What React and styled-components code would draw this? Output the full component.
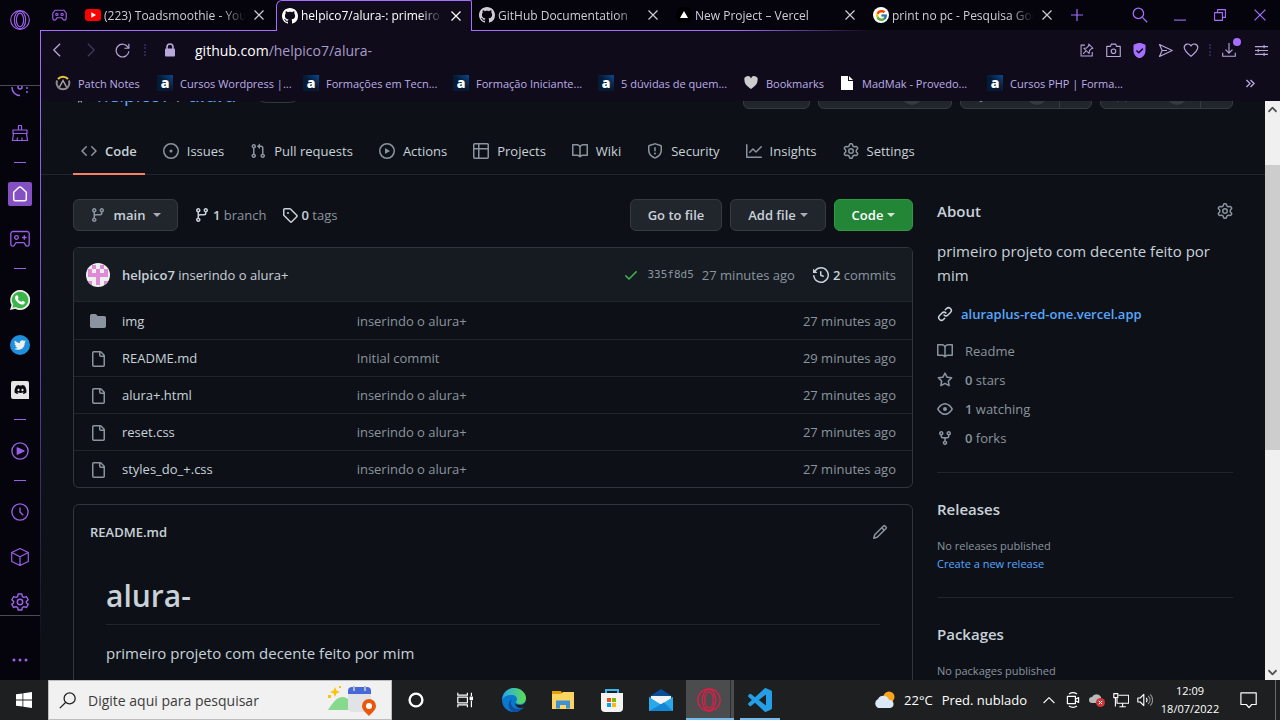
import { useState } from 'react';
import styled, { createGlobalStyle, css } from 'styled-components';
import { FaDiscord, FaTwitter } from 'react-icons/fa';
import { FcGoogle } from 'react-icons/fc';

const GlobalStyle = createGlobalStyle`
  * {
    box-sizing: border-box;
  }

  body {
    margin: 0;
    background: #0d1117;
    font-family: 'Open Sans', 'Noto Sans', sans-serif;
    font-size: 13px;
  }

  button {
    margin: 0;
    padding: 0;
    border: 0;
    background: none;
    color: inherit;
    font: inherit;
    cursor: pointer;
  }

  a {
    color: inherit;
    text-decoration: none;
  }

  svg {
    display: block;
    flex: none;
  }
`;

/* ---------- icons ---------- */

const OCTICONS = {
  code: 'M4.72 3.22a.75.75 0 011.06 1.06L2.06 8l3.72 3.72a.75.75 0 11-1.06 1.06L.47 8.53a.75.75 0 010-1.06l4.25-4.25zm6.56 0a.75.75 0 10-1.06 1.06L13.94 8l-3.72 3.72a.75.75 0 101.06 1.06l4.25-4.25a.75.75 0 000-1.06l-4.25-4.25z',
  issue: 'M8 9.5a1.5 1.5 0 100-3 1.5 1.5 0 000 3zM8 0a8 8 0 100 16A8 8 0 008 0zM1.5 8a6.5 6.5 0 1113 0 6.5 6.5 0 01-13 0z',
  pull: 'M7.177 3.073L9.573.677A.25.25 0 0110 .854v4.792a.25.25 0 01-.427.177L7.177 3.427a.25.25 0 010-.354zM3.75 2.5a.75.75 0 100 1.5.75.75 0 000-1.5zm-2.25.75a2.25 2.25 0 113 2.122v5.256a2.251 2.251 0 11-1.5 0V5.372A2.25 2.25 0 011.5 3.25zM11 2.5h-1V4h1a1 1 0 011 1v5.628a2.251 2.251 0 101.5 0V5A2.5 2.5 0 0011 2.5zm1 10.25a.75.75 0 111.5 0 .75.75 0 01-1.5 0zM3.75 12a.75.75 0 100 1.5.75.75 0 000-1.5z',
  play: 'M1.5 8a6.5 6.5 0 1113 0 6.5 6.5 0 01-13 0zM8 0a8 8 0 100 16A8 8 0 008 0zM6.379 5.227A.25.25 0 006 5.442v5.117a.25.25 0 00.379.214l4.264-2.559a.25.25 0 000-.428L6.379 5.227z',
  table: 'M0 1.75C0 .784.784 0 1.75 0h12.5C15.216 0 16 .784 16 1.75v12.5A1.75 1.75 0 0114.25 16H1.75A1.75 1.75 0 010 14.25V1.75zM1.5 6.5v7.75c0 .138.112.25.25.25H5v-8H1.5zM5 5H1.5V1.75a.25.25 0 01.25-.25H5V5zm1.5 1.5v8h7.75a.25.25 0 00.25-.25V6.5h-8zm8-1.5h-8V1.5h7.75a.25.25 0 01.25.25V5z',
  book: 'M0 1.75A.75.75 0 01.75 1h4.253c1.227 0 2.317.59 3 1.501A3.744 3.744 0 0111.006 1h4.245a.75.75 0 01.75.75v10.5a.75.75 0 01-.75.75h-4.507a2.25 2.25 0 00-1.591.659l-.622.621a.75.75 0 01-1.06 0l-.622-.621A2.25 2.25 0 005.258 13H.75a.75.75 0 01-.75-.75V1.75zm8.755 3a2.25 2.25 0 012.25-2.25H14.5v9h-3.757c-.71 0-1.4.201-1.992.572l.004-7.322zm-1.504 7.324l.004-5.073-.002-2.253A2.25 2.25 0 005.003 2.5H1.5v9h3.757a3.75 3.75 0 011.994.574z',
  shield: 'M7.467.133a1.75 1.75 0 011.066 0l5.25 1.68A1.75 1.75 0 0115 3.48V7c0 1.566-.32 3.182-1.303 4.682-.983 1.498-2.585 2.813-5.032 3.855a1.7 1.7 0 01-1.33 0c-2.447-1.042-4.049-2.357-5.032-3.855C1.32 10.182 1 8.566 1 7V3.48a1.75 1.75 0 011.217-1.667l5.25-1.68zm.61 1.429a.25.25 0 00-.153 0l-5.25 1.68a.25.25 0 00-.174.238V7c0 1.358.275 2.666 1.057 3.86.784 1.194 2.121 2.34 4.366 3.297a.2.2 0 00.154 0c2.245-.956 3.582-2.104 4.366-3.298C13.225 9.666 13.5 8.36 13.5 7V3.48a.25.25 0 00-.174-.237l-5.25-1.68zM9 10.5a1 1 0 11-2 0 1 1 0 012 0zm-.25-5.75a.75.75 0 10-1.5 0v3a.75.75 0 001.5 0v-3z',
  graph: 'M1.5 1.75a.75.75 0 00-1.5 0v12.5c0 .414.336.75.75.75h14.5a.75.75 0 000-1.5H1.5V1.75zm14.28 2.53a.75.75 0 00-1.06-1.06L10 7.94 7.53 5.47a.75.75 0 00-1.06 0L3.22 8.72a.75.75 0 001.06 1.06L7 7.06l2.47 2.47a.75.75 0 001.06 0l5.25-5.25z',
  gear: 'M7.429 1.525a6.593 6.593 0 011.142 0c.036.003.108.036.137.146l.289 1.105c.147.56.55.967.997 1.189.174.086.341.183.501.29.417.278.97.423 1.53.27l1.102-.303c.11-.03.175.016.195.046.219.31.41.641.573.989.014.031.022.11-.059.19l-.815.806c-.411.406-.562.957-.53 1.456a4.588 4.588 0 010 .582c-.032.499.119 1.05.53 1.456l.815.806c.08.08.073.159.059.19a6.494 6.494 0 01-.573.99c-.02.029-.086.074-.195.045l-1.103-.303c-.559-.153-1.112-.008-1.529.27-.16.107-.327.204-.5.29-.449.222-.851.628-.998 1.189l-.289 1.105c-.029.11-.101.143-.137.146a6.613 6.613 0 01-1.142 0c-.036-.003-.108-.037-.137-.146l-.289-1.105c-.147-.56-.55-.967-.997-1.189a4.502 4.502 0 01-.501-.29c-.417-.278-.97-.423-1.53-.27l-1.102.303c-.11.03-.175-.016-.195-.046a6.492 6.492 0 01-.573-.989c-.014-.031-.022-.11.059-.19l.815-.806c.411-.406.562-.957.53-1.456a4.587 4.587 0 010-.582c.032-.499-.119-1.05-.53-1.456l-.815-.806c-.08-.08-.073-.159-.059-.19a6.44 6.44 0 01.573-.99c.02-.029.086-.075.195-.045l1.103.303c.559.153 1.112.008 1.529-.27.16-.107.327-.204.5-.29.449-.222.851-.628.998-1.189l.289-1.105c.029-.11.101-.143.137-.146zM8 0c-.236 0-.47.01-.701.03-.743.065-1.29.615-1.458 1.261l-.29 1.106c-.017.066-.078.158-.211.224a5.994 5.994 0 00-.668.386c-.123.082-.233.09-.3.071L3.27 2.776c-.644-.177-1.392.02-1.82.63a7.977 7.977 0 00-.704 1.217c-.315.675-.111 1.422.363 1.891l.815.806c.05.048.098.147.088.294a6.084 6.084 0 000 .772c.01.147-.038.246-.088.294l-.815.806c-.474.469-.678 1.216-.363 1.891.2.428.436.835.704 1.218.428.609 1.176.806 1.82.63l1.103-.303c.066-.019.176-.011.299.071.213.143.436.272.668.386.133.066.194.158.212.224l.289 1.106c.169.646.715 1.196 1.458 1.26a8.094 8.094 0 001.402 0c.743-.064 1.29-.614 1.458-1.26l.29-1.106c.017-.066.078-.158.211-.224a5.98 5.98 0 00.668-.386c.123-.082.233-.09.3-.071l1.102.302c.644.177 1.392-.02 1.82-.63.268-.382.505-.789.704-1.217.315-.675.111-1.422-.364-1.891l-.814-.806c-.05-.048-.098-.147-.088-.294a6.1 6.1 0 000-.772c-.01-.147.039-.246.088-.294l.814-.806c.475-.469.679-1.216.364-1.891a7.992 7.992 0 00-.704-1.218c-.428-.609-1.176-.806-1.82-.63l-1.103.303c-.066.019-.176.011-.299-.071a5.991 5.991 0 00-.668-.386c-.133-.066-.194-.158-.212-.224L10.16 1.29C9.99.645 9.444.095 8.701.031A8.094 8.094 0 008 0zm1.5 8a1.5 1.5 0 11-3 0 1.5 1.5 0 013 0zM11 8a3 3 0 11-6 0 3 3 0 016 0z',
  branch: 'M11.75 2.5a.75.75 0 100 1.5.75.75 0 000-1.5zm-2.25.75a2.25 2.25 0 113 2.122V6A2.5 2.5 0 0110 8.5H6a1 1 0 00-1 1v1.128a2.251 2.251 0 11-1.5 0V5.372a2.25 2.25 0 111.5 0v1.836A2.492 2.492 0 016 7h4a1 1 0 001-1v-.628A2.25 2.25 0 019.5 3.25zM4.25 12a.75.75 0 100 1.5.75.75 0 000-1.5zM3.5 3.25a.75.75 0 111.5 0 .75.75 0 01-1.5 0z',
  tag: 'M2.5 7.775V2.75a.25.25 0 01.25-.25h5.025a.25.25 0 01.177.073l6.25 6.25a.25.25 0 010 .354l-5.025 5.025a.25.25 0 01-.354 0l-6.25-6.25a.25.25 0 01-.073-.177zm-1.5 0V2.75C1 1.784 1.784 1 2.75 1h5.025c.464 0 .91.184 1.238.513l6.25 6.25a1.75 1.75 0 010 2.474l-5.026 5.026a1.75 1.75 0 01-2.474 0l-6.25-6.25A1.75 1.75 0 011 7.775zM6 5a1 1 0 100 2 1 1 0 000-2z',
  history: 'M1.643 3.143L.427 1.927A.25.25 0 000 2.104V5.75c0 .138.112.25.25.25h3.646a.25.25 0 00.177-.427L2.715 4.215a6.5 6.5 0 11-1.18 4.458.75.75 0 10-1.493.154 8.001 8.001 0 101.6-5.684zM7.75 4a.75.75 0 01.75.75v2.992l2.028.812a.75.75 0 01-.557 1.392l-2.5-1A.75.75 0 017 8.25v-3.5A.75.75 0 017.75 4z',
  check: 'M13.78 4.22a.75.75 0 010 1.06l-7.25 7.25a.75.75 0 01-1.06 0L2.22 9.28a.75.75 0 011.06-1.06L6 10.94l6.72-6.72a.75.75 0 011.06 0z',
  folder: 'M1.75 1A1.75 1.75 0 000 2.75v10.5C0 14.216.784 15 1.75 15h12.5A1.75 1.75 0 0016 13.25v-8.5A1.75 1.75 0 0014.25 3h-6.5a.25.25 0 01-.2-.1l-.9-1.2c-.33-.44-.85-.7-1.4-.7h-3.5z',
  file: 'M3.75 1.5a.25.25 0 00-.25.25v12.5c0 .138.112.25.25.25h9.5a.25.25 0 00.25-.25V6h-2.75A1.75 1.75 0 019 4.25V1.5H3.75zm6.75.062V4.25c0 .138.112.25.25.25h2.688a.252.252 0 00-.011-.013l-2.914-2.914a.272.272 0 00-.013-.011zM2 1.75C2 .784 2.784 0 3.75 0h6.586c.464 0 .909.184 1.237.513l2.914 2.914c.329.328.513.773.513 1.237v9.586A1.75 1.75 0 0113.25 16h-9.5A1.75 1.75 0 012 14.25V1.75z',
  pencil: 'M11.013 1.427a1.75 1.75 0 012.474 0l1.086 1.086a1.75 1.75 0 010 2.474l-8.61 8.61c-.21.21-.47.364-.756.445l-3.251.93a.75.75 0 01-.927-.928l.929-3.25a1.75 1.75 0 01.445-.758l8.61-8.61zm1.414 1.06a.25.25 0 00-.354 0L10.811 3.75l1.439 1.44 1.263-1.263a.25.25 0 000-.354l-1.086-1.086zM11.189 6.25L9.75 4.81l-6.286 6.287a.25.25 0 00-.064.108l-.558 1.953 1.953-.558a.249.249 0 00.108-.064l6.286-6.286z',
  link: 'M7.775 3.275a.75.75 0 001.06 1.06l1.25-1.25a2 2 0 112.83 2.83l-2.5 2.5a2 2 0 01-2.83 0 .75.75 0 00-1.06 1.06 3.5 3.5 0 004.95 0l2.5-2.5a3.5 3.5 0 00-4.95-4.95l-1.25 1.25zm-4.69 9.64a2 2 0 010-2.83l2.5-2.5a2 2 0 012.83 0 .75.75 0 001.06-1.06 3.5 3.5 0 00-4.95 0l-2.5 2.5a3.5 3.5 0 004.95 4.95l1.25-1.25a.75.75 0 00-1.06-1.06l-1.25 1.25a2 2 0 01-2.83 0z',
  star: 'M8 .25a.75.75 0 01.673.418l1.882 3.815 4.21.612a.75.75 0 01.416 1.279l-3.046 2.97.719 4.192a.75.75 0 01-1.088.791L8 12.347l-3.766 1.98a.75.75 0 01-1.088-.79l.72-4.194L.818 6.374a.75.75 0 01.416-1.28l4.21-.611L7.327.668A.75.75 0 018 .25zm0 2.445L6.615 5.5a.75.75 0 01-.564.41l-3.097.45 2.24 2.184a.75.75 0 01.216.664l-.528 3.084 2.769-1.456a.75.75 0 01.698 0l2.77 1.456-.53-3.084a.75.75 0 01.216-.664l2.24-2.183-3.096-.45a.75.75 0 01-.564-.41L8 2.694v.001z',
  eye: 'M1.679 7.932c.412-.621 1.242-1.75 2.366-2.717C5.175 4.242 6.527 3.5 8 3.5c1.473 0 2.824.742 3.955 1.715 1.124.967 1.954 2.096 2.366 2.717a.119.119 0 010 .136c-.412.621-1.242 1.75-2.366 2.717C10.825 11.758 9.473 12.5 8 12.5c-1.473 0-2.824-.742-3.955-1.715C2.92 9.818 2.09 8.69 1.679 8.068a.119.119 0 010-.136zM8 2c-1.981 0-3.67.992-4.933 2.078C1.797 5.169.88 6.423.43 7.1a1.619 1.619 0 000 1.798c.45.678 1.367 1.932 2.637 3.024C4.329 13.008 6.019 14 8 14c1.981 0 3.67-.992 4.933-2.078 1.27-1.091 2.187-2.345 2.637-3.023a1.619 1.619 0 000-1.798c-.45-.678-1.367-1.932-2.637-3.023C11.671 2.992 9.981 2 8 2zm0 8a2 2 0 100-4 2 2 0 000 4z',
  fork: 'M5 3.25a.75.75 0 11-1.5 0 .75.75 0 011.5 0zm0 2.122a2.25 2.25 0 10-1.5 0v.878A2.25 2.25 0 005.75 8.5h1.5v2.128a2.251 2.251 0 101.5 0V8.5h1.5a2.25 2.25 0 002.25-2.25v-.878a2.25 2.25 0 10-1.5 0v.878a.75.75 0 01-.75.75h-4.5A.75.75 0 015 6.25v-.878zm3.75 7.378a.75.75 0 11-1.5 0 .75.75 0 011.5 0zm3-8.75a.75.75 0 100-1.5.75.75 0 000 1.5z',
  repo: 'M2 2.5A2.5 2.5 0 014.5 0h8.75a.75.75 0 01.75.75v12.5a.75.75 0 01-.75.75h-2.5a.75.75 0 110-1.5h1.75v-2h-8a1 1 0 00-.714 1.7.75.75 0 01-1.072 1.05A2.495 2.495 0 012 11.5v-9zM5 12.25v3.25a.25.25 0 00.4.2l1.45-1.087a.25.25 0 01.3 0L8.6 15.7a.25.25 0 00.4-.2v-3.25a.25.25 0 00-.25-.25h-3.5a.25.25 0 00-.25.25z',
  mark: 'M8 0C3.58 0 0 3.58 0 8c0 3.54 2.29 6.53 5.47 7.59.4.07.55-.17.55-.38 0-.19-.01-.82-.01-1.49-2.01.37-2.53-.49-2.69-.94-.09-.23-.48-.94-.82-1.13-.28-.15-.68-.52-.01-.53.63-.01 1.08.58 1.23.82.72 1.21 1.87.87 2.33.66.07-.52.28-.87.51-1.07-1.78-.2-3.64-.89-3.64-3.95 0-.87.31-1.59.82-2.15-.08-.2-.36-1.02.08-2.12 0 0 .67-.21 2.2.82.64-.18 1.32-.27 2-.27.68 0 1.36.09 2 .27 1.53-1.04 2.2-.82 2.2-.82.44 1.1.16 1.92.08 2.12.51.56.82 1.27.82 2.15 0 3.07-1.87 3.75-3.65 3.95.29.25.54.73.54 1.48 0 1.07-.01 1.93-.01 2.2 0 .21.15.46.55.38A8.013 8.013 0 0016 8c0-4.42-3.58-8-8-8z',
};

const Octicon = ({ name, size = 16 }) => (
  <svg width={size} height={size} viewBox="0 0 16 16" fill="currentColor" aria-hidden="true">
    <path fillRule="evenodd" d={OCTICONS[name]} />
  </svg>
);

const Line = ({ size = 20, width = 1.2, children }) => (
  <svg
    width={size}
    height={size}
    viewBox="0 0 20 20"
    fill="none"
    stroke="currentColor"
    strokeWidth={width}
    strokeLinejoin="round"
    aria-hidden="true"
  >
    {children}
  </svg>
);

const OperaIcon = ({ size = 20, width }) => (
  <Line size={size} width={width}>
    <circle cx="10" cy="10" r="9.3" />
    <ellipse cx="10" cy="10" rx="5.6" ry="8.8" />
    <ellipse cx="10" cy="10" rx="3.6" ry="6.8" />
  </Line>
);

const GamepadIcon = () => (
  <Line width={1.3}>
    <path d="M3 2.5h14a2.2 2.2 0 0 1 2.2 2.2v10.6c0 2-2.6 2.6-3.6.9l-.9-1.6c-.3-.6-.8-.9-1.4-.9H6.7c-.6 0-1.1.3-1.4.9l-.9 1.6c-1 1.7-3.6 1.1-3.6-.9V4.7A2.2 2.2 0 0 1 3 2.5z" />
    <circle cx="6.5" cy="8.5" r="1.8" />
    <path d="M14.3 6.3v4.400M12.100 8.500h4.400" />
  </Line>
);

const MaskIcon = () => (
  <Line size={15} width={1.6}>
    <path d="M4 3h12l3 4v6c0 4-4 4-5 1l-1-1H7l-1 1c-1 3-5 3-5-1V7z" />
    <circle cx="6.5" cy="8.5" r="1.5" />
    <circle cx="13.5" cy="8.5" r="1.5" />
  </Line>
);

const CornerIcon = () => (
  <Line width={1.5}>
    <path d="M2 10a8 8 0 0 0 8 8.500M17 10v2M17 14v2" />
    <circle cx="10" cy="10" r="2" />
  </Line>
);

const BroomIcon = () => (
  <Line>
    <path d="M8.5 7V2.5h3V7M3 7h14v3.500H3zM3.500 10.500L2.500 17.500h15l-1-7M7 17.500l.5-3M12 17.500v-3" />
  </Line>
);

const HomeIcon = () => (
  <Line size={18} width={1.6}>
    <path d="M3 8l5.500-5.200a2.200 2.200 0 0 1 3 0L17 8v7.500a2 2 0 0 1-2 2H5a2 2 0 0 1-2-2z" />
  </Line>
);

const WhatsappIcon = () => (
  <svg width="20" height="20" viewBox="0 0 20 20" aria-hidden="true">
    <path d="M10 0a10 10 0 1 1-4.700 18.700L0 20l1.500-5A10 10 0 0 1 10 0z" fill="#eee" />
    <path d="M10 1.700a8.300 8.300 0 1 1-4.400 15.300l-3.200.8.9-3A8.300 8.300 0 0 1 10 1.700z" fill="#3bb54a" />
    <path
      d="M7 5.200c.5 0 .6.200.9.800l.6 1.400c.1.400-.7 1.100-.8 1.400.7 1.500 1.900 2.500 3.500 3.200.5-.3 1-1.300 1.400-1.200l1.900.9c.6.300.3 1.600-.3 2.200-.7.600-1.800.9-3 .5-3-1-5.300-3-6.200-5.600-.5-1.600.7-3.600 2-3.600z"
      fill="#fff"
    />
  </svg>
);

const PlayerIcon = () => (
  <Line size={18} width={1.5}>
    <circle cx="10" cy="10" r="9" />
    <path d="M7 6.500l7.500 3.500L7 13.500z" fill="currentColor" />
  </Line>
);

const ClockIcon = () => (
  <Line size={18} width={1.5}>
    <circle cx="10" cy="10" r="9" />
    <path d="M10 5v5l3.500 3.500" />
  </Line>
);

const CubeIcon = () => (
  <Line>
    <path d="M10 1.500l8.300 4v9L10 18.500l-8.300-4v-9zM1.700 5.500L10 9.800l8.300-4.300M10 9.800v8.700" />
  </Line>
);

const CogIcon = () => (
  <Line size={18} width={1.6}>
    <path d="M8 1.200h4l.6 2.700 1.800 1 2.700-.9 2 3.500-2 1.800v1.500l2 1.800-2 3.500-2.700-.9-1.800 1-.6 2.700H8l-.6-2.700-1.800-1-2.700.9-2-3.500 2-1.800V9.300l-2-1.800 2-3.500 2.700.9 1.800-1z" />
    <circle cx="10" cy="10" r="3" />
  </Line>
);

const DotsIcon = () => (
  <svg width="18" height="4" viewBox="0 0 18 4" fill="currentColor" aria-hidden="true">
    <circle cx="3" cy="2" r="1.500" />
    <circle cx="9" cy="2" r="1.500" />
    <circle cx="15" cy="2" r="1.500" />
  </svg>
);

const CrossIcon = ({ size = 10, width = 1.2 }) => (
  <svg width={size} height={size} viewBox="0 0 10 10" fill="none" stroke="currentColor" strokeWidth={width} aria-hidden="true">
    <path d="M.5.5l9 9M9.500.5l-9 9" />
  </svg>
);

const YoutubeIcon = () => (
  <svg width="16" height="12" viewBox="0 0 16 12" aria-hidden="true">
    <rect width="16" height="12" rx="3" fill="#f00" />
    <path d="M6.300 3.300v5.400L11 6z" fill="#fff" />
  </svg>
);

const VercelIcon = () => (
  <svg width="16" height="16" viewBox="0 0 16 16" aria-hidden="true">
    <circle cx="8" cy="8" r="8" fill="#000" />
    <path d="M8 4l4 7H4z" fill="#fff" />
  </svg>
);

const OverwatchIcon = () => (
  <svg width="16" height="16" viewBox="0 0 16 16" fill="none" strokeWidth="2" aria-hidden="true">
    <path d="M3 4a6.500 6.500 0 0 1 10 0" stroke="#e8c23c" />
    <path d="M2.200 5.500a6.300 6.300 0 1 0 11.600 0" stroke="#8d8a8b" />
    <path d="M4.500 12L8 5.500l3.500 6.500" stroke="#a9a6a6" strokeWidth="1.500" />
  </svg>
);

const HeartIcon = () => (
  <svg width="16" height="16" viewBox="0 0 16 16" fill="#cdcdcf" aria-hidden="true">
    <path d="M8 14C3 10.500 1.500 8.500 1.500 5.500a3.400 3.400 0 0 1 6.500-2 3.400 3.400 0 0 1 6.500 2C14.500 8.500 13 10.500 8 14z" />
  </svg>
);

const SheetIcon = () => (
  <svg width="16" height="16" viewBox="0 0 16 16" aria-hidden="true">
    <path d="M2 1h7v5h5v9H2zM10 1l4 4h-4z" fill="#fff" />
  </svg>
);

const AVATAR = ['01010', '10101', '11111', '00100', '10101'];

const AvatarIcon = () => (
  <svg width="24" height="24" viewBox="0 0 24 24" aria-hidden="true">
    <clipPath id="avatar">
      <circle cx="12" cy="12" r="12" />
    </clipPath>
    <g clipPath="url(#avatar)">
      <rect width="24" height="24" fill="#f0f0f0" />
      {AVATAR.map((row, y) =>
        [...row].map((on, x) => on === '1' && <rect key={`${x}${y}`} x={2 + x * 4} y={2 + y * 4} width="4" height="4" fill="#df8ad5" />),
      )}
    </g>
  </svg>
);

/* ---------- shell ---------- */

const Desktop = styled.div`
  display: flex;
  flex-direction: column;
  height: 100vh;
  overflow: hidden;
`;

const Browser = styled.div`
  flex: 1;
  display: flex;
  min-height: 0;
`;

const Rail = styled.nav`
  flex: none;
  display: flex;
  flex-direction: column;
  width: 40px;
  background: #05030b;
  color: #9a60ea;
`;

const RailTop = styled.div`
  display: flex;
  justify-content: center;
  height: 86px;
  padding-top: 10px;
  border-bottom: 1px solid #4d4b52;
`;

const RailList = styled.div`
  display: flex;
  flex-direction: column;
  flex: 1;
  min-height: 0;
  overflow: hidden;
  border-bottom: 1px solid #4d4b52;
`;

const RailButton = styled.button`
  display: flex;
  flex: none;
  align-items: center;
  justify-content: center;
  height: 45px;

  ${({ $cut }) =>
    $cut &&
    css`
      align-items: flex-end;
      height: 24px;
      padding-bottom: 13px;
    `}
`;

const RailActive = styled.span`
  display: grid;
  place-items: center;
  width: 24px;
  height: 24px;
  border-radius: 2px;
  background: #8450c4;
  color: #fff;
`;

const Dash = styled.span`
  flex: none;
  width: 12px;
  height: 1px;
  margin: 7px auto 8px;
  background: #9a60ea;
`;

const RailBottom = styled.div`
  display: flex;
  flex: none;
  align-items: center;
  justify-content: center;
  height: 64px;
  padding-top: 24px;
`;

const AppBadge = styled.span`
  display: grid;
  flex: none;
  place-items: center;
  width: ${({ $size }) => $size}px;
  height: ${({ $size }) => $size}px;
  border-radius: ${({ $square }) => ($square ? '2px 2px 0' : '50%')};
  background: ${({ $bg }) => $bg};
  color: ${({ $fg }) => $fg};
`;

const Window = styled.div`
  flex: 1;
  display: flex;
  flex-direction: column;
  min-width: 0;
  color: #bdaee6;
`;

const TabStrip = styled.div`
  display: flex;
  flex: none;
  height: 31px;
  background:
    linear-gradient(90deg, #a66fff 56%, #0f0b1b 67%) bottom / 100% 1px no-repeat,
    #05030b;
`;

const PinnedTab = styled.button`
  display: grid;
  flex: none;
  place-items: center;
  width: 39px;
  height: 30px;
  color: #9a60ea;
`;

const Tab = styled.div`
  display: flex;
  flex: 0 1 197px;
  align-items: center;
  gap: 3px;
  min-width: 0;
  padding: 0 11px 1px 6px;
  color: #cfccd6;
  font-size: 12px;

  ${({ $active }) =>
    $active &&
    css`
      flex-basis: 196px;
      margin-right: 1px;
      padding: 0 9px 1px 5px;
      border: solid #a66fff;
      border-width: 1px 1px 0;
      border-radius: 6px 2px 0 0;
      background: #0f0b1b;
      color: #fff;
    `}
`;

const TabTitle = styled.span`
  flex: 1;
  overflow: hidden;
  white-space: nowrap;
  mask-image: linear-gradient(90deg, #000 calc(100% - 24px), transparent);
`;

const TabClose = styled.button`
  display: grid;
  flex: none;
  place-items: center;
  width: 12px;
  height: 16px;
  margin-left: 4px;
`;

const WindowButtons = styled.div`
  display: flex;
  flex: none;
  margin-left: auto;
`;

const ChromeButton = styled.button`
  display: grid;
  flex: none;
  place-items: center;
  width: ${({ $w }) => $w || 40}px;
  height: 30px;
  color: ${({ $color }) => $color || '#a66fff'};
`;

const Frame = styled.div`
  flex: 1;
  display: flex;
  min-height: 0;
`;

const Edge = styled.div`
  flex: none;
  width: 1px;
  background: linear-gradient(#a66fff, #7d4fd0 40%, #0d1117 95%);
`;

const View = styled.div`
  flex: 1;
  display: flex;
  flex-direction: column;
  min-width: 0;
  background: #0f0b1b;
`;

const AddressBar = styled.div`
  display: flex;
  flex: none;
  align-items: center;
  height: 38px;
  padding: 0 3px 0 1px;
`;

const Grip = styled.span`
  flex: none;
  width: 2px;
  height: 12px;
  margin: ${({ $tight }) => ($tight ? '0 2px 0 5px' : '0 6px')};
  border-left: 2px dotted #2d2450;
`;

const Lock = styled.span`
  display: grid;
  place-items: center;
  width: 22px;
  margin: 0 14px 0 7px;
  color: #b7a8dc;
`;

const UrlButton = styled.button`
  flex: 1;
  min-width: 0;
  color: #a99cc9;
  font-size: 14px;
  text-align: left;
  cursor: text;

  b {
    color: #fff;
    font-weight: 400;
  }
`;

const UrlInput = styled.input`
  flex: 1;
  min-width: 0;
  border: 0;
  outline: 0;
  background: none;
  color: #fff;
  font: inherit;
  font-size: 14px;
`;

const Download = styled(ChromeButton)`
  position: relative;
  width: 32px;

  &::after {
    content: '';
    position: absolute;
    top: 3px;
    right: 4px;
    width: 8px;
    height: 8px;
    border-radius: 50%;
    background: #a66fff;
  }
`;

const Bookmarks = styled.div`
  display: flex;
  flex: none;
  align-items: center;
  height: 32px;
  padding: 0 10px 4px 14px;
`;

const Bookmark = styled.a`
  display: flex;
  flex: 0 1 ${({ $w }) => $w}px;
  align-items: center;
  gap: 7px;
  min-width: 0;
  font-size: 11px;
  white-space: nowrap;
`;

const AluraIcon = styled.span`
  display: grid;
  flex: none;
  place-items: center;
  width: 16px;
  height: 16px;
  background: linear-gradient(225deg, #0a4a8f, #051a35 50%);
  color: #fff;
  font-size: 14px;
  font-weight: 800;
  line-height: 14px;
`;

/* ---------- repository page ---------- */

const PageFrame = styled.div`
  flex: 1;
  display: flex;
  min-height: 0;
`;

const Page = styled.main`
  flex: 1;
  min-width: 0;
  overflow: hidden;
  background: #0d1117;
  color: #c9d1d9;
`;

const RepoHead = styled.div`
  display: flex;
  align-items: flex-end;
  justify-content: space-between;
  height: 8px;
  padding: 0 32px;
`;

const RepoTitle = styled.div`
  display: flex;
  align-items: center;
  gap: 8px;
  height: 28px;
  color: #8b949e;
  font-size: 19px;

  a {
    color: #58a6ff;
  }

  strong {
    font-weight: 600;
  }
`;

const Visibility = styled.span`
  align-self: flex-start;
  height: 22px;
  margin-left: 4px;
  padding: 0 7px;
  border: 1px solid #30363d;
  border-radius: 11px;
  font-size: 11px;
  line-height: 18px;
`;

const RepoActions = styled.div`
  display: flex;
  gap: 8px;
`;

const RepoAction = styled.div`
  display: flex;
  height: 28px;
  border: 1px solid #363b42;
  border-radius: 6px;
  background: #21262d;
  color: #c9d1d9;
  font-size: 11px;

  button {
    display: flex;
    align-items: center;
    justify-content: center;
    gap: 8px;
    width: ${({ $w }) => $w}px;
  }

  button + button {
    width: 32px;
    border-left: 1px solid #363b42;
  }

  svg {
    color: #8b949e;
  }
`;

const Count = styled.span`
  min-width: 20px;
  border-radius: 10px;
  background: #343942;
  line-height: 20px;
`;

const RepoNav = styled.nav`
  display: flex;
  gap: 10px;
  height: 48px;
  margin-top: 18px;
  padding: 0 32px;
  border-bottom: 1px solid #21262d;
`;

const RepoTab = styled.a`
  display: flex;
  align-items: center;
  gap: 8px;
  height: 48px;
  padding: 2px 8px 0;
  border-bottom: 2px solid ${({ $active }) => ($active ? '#f78166' : 'transparent')};
  font-size: 13px;
  font-weight: ${({ $active }) => ($active ? 600 : 400)};

  svg {
    color: #8b949e;
  }
`;

const Columns = styled.div`
  display: grid;
  grid-template-columns: minmax(0, 1fr) 296px;
  gap: 24px;
  padding: 24px 32px;
`;

const Toolbar = styled.div`
  display: flex;
  align-items: center;
  gap: 8px;
  height: 32px;
  margin-bottom: 16px;
`;

const Button = styled.button`
  display: flex;
  align-items: center;
  justify-content: center;
  gap: ${({ $gap }) => $gap || 4}px;
  width: ${({ $w }) => $w}px;
  height: 32px;
  border: 1px solid ${({ $primary }) => ($primary ? '#2e9a43' : '#363b42')};
  border-radius: 6px;
  background: ${({ $primary }) => ($primary ? '#238636' : '#21262d')};
  color: ${({ $primary }) => ($primary ? '#fff' : '#c9d1d9')};
  font-size: 13px;
  font-weight: 600;

  svg {
    color: #8b949e;
  }
`;

const Caret = styled.span`
  border: 4px solid transparent;
  border-bottom: 0;
  border-top-color: currentColor;
  opacity: 0.8;
`;

const RefLink = styled.a`
  display: flex;
  align-items: center;
  gap: 3px;
  margin-left: 8px;
  color: #8b949e;

  svg,
  strong {
    color: #c9d1d9;
    font-weight: 600;
  }
`;

const Spacer = styled.span`
  flex: 1;
`;

const Panel = styled.section`
  margin-bottom: 16px;
  border: 1px solid #30363d;
  border-radius: 6px;
  overflow: hidden;
`;

const CommitBar = styled.div`
  display: flex;
  align-items: center;
  gap: 8px;
  height: 54px;
  padding: 0 16px 0 12px;
  border-bottom: 1px solid #21262d;
  background: #161b22;
  color: #8b949e;

  p {
    flex: 1;
    margin: 0 0 0 4px;
    color: #c9d1d9;
  }

  strong {
    color: #c9d1d9;
    font-weight: 600;
  }
`;

const Passed = styled.span`
  color: #3fb950;
`;

const Hash = styled.a`
  font-family: 'DejaVu Sans Mono', monospace;
  font-size: 11px;
`;

const Commits = styled.a`
  display: flex;
  align-items: center;
  gap: 4px;
  margin-left: 10px;
`;

const FileTable = styled.table`
  width: 100%;
  border-collapse: collapse;
  table-layout: fixed;

  td {
    height: 37px;
    padding: 1px 0 0;
    border-top: 1px solid #21262d;
    color: #8b949e;
  }

  tr:first-child td {
    border-top: 0;
  }

  td:nth-child(1) {
    width: 48px;
    padding: 2px 0 0 16px;
  }

  td:nth-child(2) {
    width: 28%;
    color: #c9d1d9;
  }

  td:nth-child(4) {
    width: 20%;
    padding-right: 16px;
    text-align: right;
  }
`;

const ReadmeHead = styled.div`
  display: flex;
  align-items: center;
  justify-content: space-between;
  height: 54px;
  padding: 0 24px 0 16px;
  font-weight: 600;

  button {
    color: #8b949e;
  }
`;

const ReadmeBody = styled.article`
  padding: 13px 32px 32px;
  font-size: 15px;

  h1 {
    margin: 0 0 16px;
    padding-bottom: 4px;
    border-bottom: 1px solid #21262d;
    font-size: 30px;
    font-weight: 600;
    line-height: 48px;
  }

  p {
    margin: 0;
    line-height: 24px;
  }
`;

const AsideSection = styled.section`
  padding-bottom: 24px;
  margin-bottom: 24px;
  border-bottom: 1px solid #21262d;
  color: #8b949e;
  font-size: 11px;
  line-height: 18px;

  a {
    color: #58a6ff;
  }
`;

const AsideTitle = styled.h2`
  display: flex;
  align-items: center;
  justify-content: space-between;
  margin: 0 0 16px;
  color: #c9d1d9;
  font-size: 15px;
  font-weight: 600;
  line-height: 24px;

  button {
    color: #8b949e;
  }
`;

const About = styled.p`
  margin: 0 0 16px;
  color: #c9d1d9;
  font-size: 15px;
  line-height: 24px;
`;

const Homepage = styled.div`
  display: flex;
  align-items: center;
  gap: 8px;
  height: 22px;
  margin-bottom: 15px;
  color: #c9d1d9;
  font-size: 13px;
  font-weight: 600;
`;

const Facts = styled.ul`
  display: grid;
  gap: 8px;
  margin: 0;
  padding: 0;
  list-style: none;
  font-size: 13px;

  li {
    display: flex;
    align-items: center;
    gap: 12px;
    height: 21px;
  }

  strong {
    font-weight: 600;
  }
`;

const ScrollBar = styled.div`
  display: flex;
  flex: none;
  flex-direction: column;
  width: 15px;
  background: #f0f0f0;
  color: #505050;
`;

const ScrollArrow = styled.button`
  display: grid;
  place-items: center;
  height: 16px;
`;

const ScrollSpace = styled.div`
  flex: ${({ $part }) => $part};
  background: ${({ $thumb }) => ($thumb ? '#cdcdcd' : 'none')};
`;

/* ---------- taskbar ---------- */

const TaskBar = styled.footer`
  display: flex;
  flex: none;
  height: 40px;
  background: #1e1f21;
  color: #fff;
`;

const StartButton = styled.button`
  display: grid;
  place-items: center;
  width: 48px;
`;

const Search = styled.label`
  display: flex;
  flex: 0 1 344px;
  align-items: center;
  gap: 12px;
  min-width: 0;
  padding: 0 14px 0 10px;
  border: 1px solid #bdbdbd;
  background: #f1f1f1;
  color: #222;

  input {
    flex: 1;
    min-width: 0;
    padding: 0;
    border: 0;
    outline: 0;
    background: none;
    font: inherit;
    font-size: 14px;
  }

  input::placeholder {
    color: #3c3c3c;
    opacity: 1;
  }
`;

const Task = styled.button`
  display: grid;
  flex: none;
  place-items: center;
  width: 48px;
  margin-right: 1px;

  ${({ $state }) =>
    $state === 'open' &&
    css`
      width: 40px;
      margin: 0 4px 0 5px;
      border-top: 2px solid transparent;
      border-bottom: 2px solid #76b9ed;
    `}

  ${({ $state }) =>
    $state === 'active' &&
    css`
      border-bottom: 2px solid #76b9ed;
      background: linear-gradient(90deg, #4b4c4e 44px, #2c2d2f 44px, #2c2d2f 45px, #4b4c4e 45px);
      padding: 2px 3px 0 0;
    `}
`;

const Tray = styled.div`
  display: flex;
  align-items: center;
  margin-left: auto;
`;

const Weather = styled.button`
  display: flex;
  align-items: center;
  gap: 9px;
  margin-right: 10px;
`;

const TrayButton = styled.button`
  display: grid;
  place-items: center;
  width: 24px;
  height: 40px;
`;

const Clock = styled.button`
  width: 66px;
  font-size: 11px;
  line-height: 18px;
  text-align: center;
`;

const NoticeButton = styled.button`
  display: grid;
  place-items: center;
  width: 53px;
  height: 40px;
  border-right: 1px solid #6b6b6d;
  margin-right: 4px;
`;

const repoTabs = [
  ['code', 'Code'],
  ['issue', 'Issues'],
  ['pull', 'Pull requests'],
  ['play', 'Actions'],
  ['table', 'Projects'],
  ['book', 'Wiki'],
  ['shield', 'Security'],
  ['graph', 'Insights'],
  ['gear', 'Settings'],
];

const files = [
  ['folder', 'img', 'inserindo o alura+', '27 minutes ago'],
  ['file', 'README.md', 'Initial commit', '29 minutes ago'],
  ['file', 'alura+.html', 'inserindo o alura+', '27 minutes ago'],
  ['file', 'reset.css', 'inserindo o alura+', '27 minutes ago'],
  ['file', 'styles_do_+.css', 'inserindo o alura+', '27 minutes ago'],
];

const alura = <AluraIcon aria-hidden="true">a</AluraIcon>;

const bookmarks = [
  [<OverwatchIcon />, 'Patch Notes', 102],
  [alura, 'Cursos Wordpress |...', 146],
  [alura, 'Formações em Tecn...', 150],
  [alura, 'Formação Iniciante...', 145],
  [alura, '5 dúvidas de quem...', 145],
  [<HeartIcon />, 'Bookmarks', 96],
  [<SheetIcon />, 'MadMak - Provedo...', 148],
  [alura, 'Cursos PHP | Forma...', 140],
];

const tabs = [
  [<YoutubeIcon />, '(223) Toadsmoothie - YouTube'],
  [<Octicon name="mark" />, 'helpico7/alura-: primeiro projeto com decente feito por mim', true],
  [<Octicon name="mark" />, 'GitHub Documentation'],
  [<VercelIcon />, 'New Project – Vercel'],
  [
    <AppBadge $size={16} $bg="#fff">
      <FcGoogle size={13} />
    </AppBadge>,
    'print no pc - Pesquisa Google',
  ],
];

const SideRail = () => (
  <Rail aria-label="Sidebar">
    <RailTop>
      <OperaIcon />
    </RailTop>
    <RailList>
      <RailButton $cut aria-label="GX Corner">
        <CornerIcon />
      </RailButton>
      <RailButton aria-label="Cleaner">
        <BroomIcon />
      </RailButton>
      <Dash />
      <RailButton aria-label="Home">
        <RailActive>
          <HomeIcon />
        </RailActive>
      </RailButton>
      <RailButton aria-label="Games">
        <GamepadIcon />
      </RailButton>
      <Dash />
      <RailButton aria-label="WhatsApp">
        <WhatsappIcon />
      </RailButton>
      <RailButton aria-label="Twitter">
        <AppBadge $size={20} $bg="#1d8fdd" $fg="#eee">
          <FaTwitter size={12} />
        </AppBadge>
      </RailButton>
      <RailButton aria-label="Discord">
        <AppBadge $size={18} $square $bg="#e6e6e6" $fg="#0a0810">
          <FaDiscord size={13} />
        </AppBadge>
      </RailButton>
      <Dash />
      <RailButton aria-label="Player">
        <PlayerIcon />
      </RailButton>
      <Dash />
      <RailButton aria-label="History">
        <ClockIcon />
      </RailButton>
      <RailButton aria-label="Extensions">
        <CubeIcon />
      </RailButton>
      <RailButton aria-label="Settings">
        <CogIcon />
      </RailButton>
    </RailList>
    <RailBottom>
      <DotsIcon />
    </RailBottom>
  </Rail>
);

const BrowserTabs = () => (
  <TabStrip>
    <PinnedTab aria-label="GX Corner">
      <MaskIcon />
    </PinnedTab>
    {tabs.map(([icon, title, active]) => (
      <Tab key={title} $active={active}>
        {icon}
        <TabTitle>{title}</TabTitle>
        <TabClose aria-label="Close tab">
          <CrossIcon />
        </TabClose>
      </Tab>
    ))}
    <ChromeButton $w={26} aria-label="New tab">
      <Line size={12} width={2}>
        <path d="M10 0v20M0 10h20" />
      </Line>
    </ChromeButton>
    <WindowButtons>
      <ChromeButton aria-label="Search tabs">
        <Line size={16} width={1.6}>
          <circle cx="8" cy="8" r="6.500" />
          <path d="M13 13l6 6" />
        </Line>
      </ChromeButton>
      <ChromeButton aria-label="Minimize">
        <Line size={12} width={1.8}>
          <path d="M0 18.500h20" />
        </Line>
      </ChromeButton>
      <ChromeButton aria-label="Restore">
        <Line size={12} width={1.8}>
          <path d="M1 6h13v13H1zM6 6V1h13v13h-5" />
        </Line>
      </ChromeButton>
      <ChromeButton aria-label="Close">
        <CrossIcon size={12} width={1} />
      </ChromeButton>
    </WindowButtons>
  </TabStrip>
);

const Address = () => {
  const [editing, setEditing] = useState(false);

  return (
    <AddressBar>
      <ChromeButton $w={32} $color="#b7a8dc" aria-label="Back">
        <Line size={14} width={1.8}>
          <path d="M13 1L4 10l9 9" />
        </Line>
      </ChromeButton>
      <ChromeButton $w={32} $color="#433a5c" aria-label="Forward">
        <Line size={14} width={1.8}>
          <path d="M7 1l9 9-9 9" />
        </Line>
      </ChromeButton>
      <ChromeButton $w={32} $color="#b7a8dc" aria-label="Reload">
        <Line size={15} width={1.6}>
          <path d="M17.500 6A8.500 8.500 0 1 0 18.500 11M18.500 1v6h-6" />
        </Line>
      </ChromeButton>
      <Grip />
      <Lock>
        <svg width="12" height="14" viewBox="0 0 12 14" aria-hidden="true">
          <path d="M3 6V4a3 3 0 0 1 6 0v2" fill="none" stroke="currentColor" strokeWidth="1.600" />
          <rect x="1" y="5.500" width="10" height="8" rx="1" fill="currentColor" />
        </svg>
      </Lock>
      {editing ? (
        <UrlInput aria-label="Address" defaultValue="github.com/helpico7/alura-" autoFocus onBlur={() => setEditing(false)} />
      ) : (
        <UrlButton onClick={() => setEditing(true)}>
          <b>github.com</b>/helpico7/alura-
        </UrlButton>
      )}
      <ChromeButton $w={26} $color="#b7a8dc" aria-label="Pin">
        <Line size={14} width={1.5}>
          <path d="M7 3H1.500v15.500h16V13M12.500 1.500l6 6-2 .5-3 3-.5 4-7.500-7.500 4-.5 3-3zM9 11l-4.500 4.500" />
        </Line>
      </ChromeButton>
      <ChromeButton $w={26} $color="#b7a8dc" aria-label="Snapshot">
        <Line size={15} width={1.5}>
          <path d="M1 4.500h5l1-3h6l1 3h5V18H1z" />
          <circle cx="10" cy="11" r="3" />
        </Line>
      </ChromeButton>
      <ChromeButton $w={26} aria-label="Ad blocker">
        <Line size={15} width={2}>
          <path d="M10 .5l7 2.500v7c0 5-3 8-7 9.500C6 18 3 15 3 10V3z" fill="currentColor" />
          <path d="M6 10l3 3 5.500-5.500" stroke="#0f0b1b" />
        </Line>
      </ChromeButton>
      <ChromeButton $w={26} $color="#b7a8dc" aria-label="Send">
        <Line size={15} width={1.5}>
          <path d="M2 2l17 8-17 8 3.500-8zM5.500 10H12" />
        </Line>
      </ChromeButton>
      <ChromeButton $w={26} $color="#b7a8dc" aria-label="Favourite">
        <Line size={16} width={1.5}>
          <path d="M10 18C4 13 1.500 10.500 1.500 7a4.500 4.500 0 0 1 8.500-2 4.500 4.500 0 0 1 8.500 2c0 3.500-2.500 6-8.500 11z" />
        </Line>
      </ChromeButton>
      <Grip $tight />
      <Download $color="#b7a8dc" aria-label="Downloads">
        <Line size={14} width={1.6}>
          <path d="M10 0v14M5 9.500l5 5 5-5M1 14v5h18v-5" />
        </Line>
      </Download>
      <ChromeButton $w={32} $color="#b7a8dc" aria-label="Easy setup">
        <Line size={13} width={1.7}>
          <path d="M0 4h20M0 10h20M0 16h20M14 1.500v5M5 7.500v5M14 13.500v5" />
        </Line>
      </ChromeButton>
    </AddressBar>
  );
};

const CommitTable = () => (
  <Panel>
    <CommitBar>
      <AvatarIcon />
      <p>
        <strong>helpico7</strong> inserindo o alura+
      </p>
      <Passed>
        <Octicon name="check" />
      </Passed>
      <Hash href="#commit">335f8d5</Hash>
      <span>27 minutes ago</span>
      <Commits href="#commits">
        <strong>
          <Octicon name="history" />
        </strong>
        <span>
          <strong>2</strong> commits
        </span>
      </Commits>
    </CommitBar>
    <FileTable>
      <tbody>
        {files.map(([icon, name, message, time]) => (
          <tr key={name}>
            <td>
              <Octicon name={icon} />
            </td>
            <td>
              <a href={`#${name}`}>{name}</a>
            </td>
            <td>{message}</td>
            <td>{time}</td>
          </tr>
        ))}
      </tbody>
    </FileTable>
  </Panel>
);

const RepoAside = () => (
  <aside>
    <AsideSection>
      <AsideTitle>
        About
        <button aria-label="Edit repository details">
          <Octicon name="gear" />
        </button>
      </AsideTitle>
      <About>primeiro projeto com decente feito por mim</About>
      <Homepage>
        <Octicon name="link" />
        <a href="#site">aluraplus-red-one.vercel.app</a>
      </Homepage>
      <Facts>
        <li>
          <Octicon name="book" /> Readme
        </li>
        <li>
          <Octicon name="star" />
          <span>
            <strong>0</strong> stars
          </span>
        </li>
        <li>
          <Octicon name="eye" />
          <span>
            <strong>1</strong> watching
          </span>
        </li>
        <li>
          <Octicon name="fork" />
          <span>
            <strong>0</strong> forks
          </span>
        </li>
      </Facts>
    </AsideSection>
    <AsideSection>
      <AsideTitle>Releases</AsideTitle>
      <div>No releases published</div>
      <a href="#release">Create a new release</a>
    </AsideSection>
    <AsideSection>
      <AsideTitle>Packages</AsideTitle>
      <div>No packages published</div>
    </AsideSection>
  </aside>
);

const Repository = () => (
  <Page>
    <RepoHead>
      <RepoTitle>
        <Octicon name="repo" />
        <span>
          <a href="#owner">helpico7</a> /{' '}
          <a href="#repo">
            <strong>alura-</strong>
          </a>
        </span>
        <Visibility>Public</Visibility>
      </RepoTitle>
      <RepoActions>
        <RepoAction $w={65}>
          <button>Pin</button>
        </RepoAction>
        <RepoAction $w={132}>
          <button>
            Unwatch <Count>1</Count>
          </button>
        </RepoAction>
        <RepoAction $w={98}>
          <button>
            <Octicon name="fork" />
            Fork <Count>0</Count>
          </button>
          <button aria-label="Fork options">
            <Caret />
          </button>
        </RepoAction>
        <RepoAction $w={99}>
          <button>
            <Octicon name="star" />
            Star <Count>0</Count>
          </button>
          <button aria-label="Star options">
            <Caret />
          </button>
        </RepoAction>
      </RepoActions>
    </RepoHead>
    <RepoNav>
      {repoTabs.map(([icon, label], i) => (
        <RepoTab key={label} href={`#${label}`} $active={i === 0}>
          <Octicon name={icon} />
          {label}
        </RepoTab>
      ))}
    </RepoNav>
    <Columns>
      <div>
        <Toolbar>
          <Button $w={105} $gap={8}>
            <Octicon name="branch" />
            main
            <Caret />
          </Button>
          <RefLink href="#branches">
            <Octicon name="branch" />
            <span>
              <strong>1</strong> branch
            </span>
          </RefLink>
          <RefLink href="#tags">
            <Octicon name="tag" />
            <span>
              <strong>0</strong> tags
            </span>
          </RefLink>
          <Spacer />
          <Button $w={92}>Go to file</Button>
          <Button $w={96}>
            Add file <Caret />
          </Button>
          <Button $w={79} $primary>
            Code <Caret />
          </Button>
        </Toolbar>
        <CommitTable />
        <Panel>
          <ReadmeHead>
            README.md
            <button aria-label="Edit file">
              <Octicon name="pencil" />
            </button>
          </ReadmeHead>
          <ReadmeBody>
            <h1>alura-</h1>
            <p>primeiro projeto com decente feito por mim</p>
          </ReadmeBody>
        </Panel>
      </div>
      <RepoAside />
    </Columns>
  </Page>
);

const Chevron = ({ down }) => (
  <Line size={9} width={4}>
    <path d={down ? 'M1 5l9 9 9-9' : 'M1 15l9-9 9 9'} />
  </Line>
);

const SearchArt = () => (
  <svg width="50" height="32" viewBox="0 0 50 32" aria-hidden="true">
    <path d="M1 26c6-9 9-13 15-13 5 0 8 5 10 13z" fill="#86d98d" />
    <path d="M8 3l1.500 3.500L13 8l-3.500 1.500L8 13 6.500 9.500 3 8l3.500-1.500z" fill="#fbc40b" />
    <path d="M1 11h3v3H1zM12 2h2v2h-2z" fill="#fbc40b" />
    <rect x="21" y="4" width="23" height="24" rx="4" fill="#e2e3e6" />
    <path d="M21 10V7a4 4 0 0 1 4-4h15a4 4 0 0 1 4 4v3z" fill="#4668d8" />
    <path d="M27 2v5M38 2v5" stroke="#b4bac6" strokeWidth="2" />
    <path d="M42 32c-4-4-7-6.500-7-10a7 7 0 0 1 14 0c0 3.500-3 6-7 10z" fill="#e8590c" />
    <circle cx="42" cy="22" r="3" fill="#fff" />
  </svg>
);

const EdgeIcon = () => (
  <svg width="24" height="24" viewBox="0 0 24 24" aria-hidden="true">
    <defs>
      <linearGradient id="edgeTop" x1="0" x2="1">
        <stop offset="0" stopColor="#24a8ee" />
        <stop offset="1" stopColor="#5fdc52" />
      </linearGradient>
    </defs>
    <circle cx="12" cy="12" r="12" fill="#0b78d0" />
    <path d="M0 12C1 4 6 0 12 0c7 0 12 5 12 10 0 4-3 6-6 6-3 0-4-1-4-2s1-1 1-3c0-2-2-4-5-4-5 0-9 2-10 5z" fill="url(#edgeTop)" />
    <path d="M10 11c-3 5 1 10 6 10 3 0 5-1 6-3-2 4-6 6-10 6-5-1-8-9-2-13z" fill="#104f9c" />
    <path d="M24 11c0 4-3 6-6 6-3 0-5-1-5-2 0 3 3 5 6 5 2 0 3-1 4-2 1-2 1-4 1-7z" fill="#1e1f21" />
  </svg>
);

const TaskIcons = () => (
  <>
    <Task aria-label="Cortana">
      <Line size={16} width={3}>
        <circle cx="10" cy="10" r="8" />
      </Line>
    </Task>
    <Task aria-label="Task view">
      <Line size={16} width={1.5}>
        <path d="M1 1v3h12V1M1 6.500h12v7H1zM1 19v-3h12v3M18 1v4M18 11v8" />
        <path d="M16.500 6.500h3v3h-3z" fill="currentColor" />
      </Line>
    </Task>
    <Task aria-label="Edge">
      <EdgeIcon />
    </Task>
    <Task aria-label="File explorer">
      <svg width="22" height="20" viewBox="0 0 22 20" aria-hidden="true">
        <path d="M0 1h9l1 2v4H0z" fill="#e2a105" />
        <path d="M0 4h9l2-2h11v17H0z" fill="#fcd462" />
        <path d="M4 18.500v-8h14v8h-4V15H8v3.500z" fill="#3f92d2" />
      </svg>
    </Task>
    <Task aria-label="Store">
      <svg width="24" height="24" viewBox="0 0 24 24" aria-hidden="true">
        <path d="M6 6V2h12v4" fill="none" stroke="#37b5ee" strokeWidth="2" />
        <path d="M1 5h22v15a4 4 0 0 1-4 4H5a4 4 0 0 1-4-4z" fill="#f4f4f4" />
        <path d="M7 10h4v4H7z" fill="#f25022" />
        <path d="M12 10h4v4h-4z" fill="#7fba00" />
        <path d="M7 15h4v4H7z" fill="#00a4ef" />
        <path d="M12 15h4v4h-4z" fill="#ffb900" />
      </svg>
    </Task>
    <Task aria-label="Mail">
      <svg width="24" height="24" viewBox="0 0 24 24" aria-hidden="true">
        <path d="M0 9l12-8 12 8v6H0z" fill="#0a4e9b" />
        <path d="M2 8h20v8H2z" fill="#f3f3f3" />
        <path d="M0 9l12 7.500L24 9v14H0z" fill="#29a9ea" />
        <path d="M0 23l15-8.500L24 23z" fill="#1686d4" />
      </svg>
    </Task>
    <Task $state="active" aria-label="Opera GX">
      <AppBadge $size={24} $fg="#e11d48">
        <OperaIcon size={24} width={1.1} />
      </AppBadge>
    </Task>
    <Task $state="open" aria-label="Visual Studio Code">
      <svg width="24" height="24" viewBox="0 0 24 24" fill="#249fe6" aria-hidden="true">
        <path d="M23.150 2.587L18.210.21a1.494 1.494 0 0 0-1.705.29l-9.460 8.630-4.120-3.128a.999.999 0 0 0-1.276.057L.327 7.261A1 1 0 0 0 .326 8.740L3.899 12 .326 15.260a1 1 0 0 0 .001 1.479L1.650 17.940a.999.999 0 0 0 1.276.057l4.120-3.128 9.460 8.630a1.492 1.492 0 0 0 1.704.29l4.942-2.377A1.500 1.500 0 0 0 24 20.060V3.939a1.500 1.500 0 0 0-.85-1.352zm-5.146 14.861L10.826 12l7.178-5.448v10.896z" />
      </svg>
    </Task>
  </>
);

const SystemTray = () => (
  <Tray>
    <Weather>
      <svg width="22" height="18" viewBox="0 0 22 18" aria-hidden="true">
        <circle cx="16" cy="6" r="5.500" fill="#f9a51b" />
        <path d="M5 17a5 5 0 0 1 0-9 6 6 0 0 1 11 1 4 4 0 0 1 1 8z" fill="#dce8f8" />
      </svg>
      <span>22°C</span>
      <span>Pred. nublado</span>
    </Weather>
    <TrayButton aria-label="Hidden icons">
      <Line size={12} width={1.8}>
        <path d="M1 15l9-9 9 9" />
      </Line>
    </TrayButton>
    <TrayButton aria-label="Meet now">
      <Line size={16} width={1.5}>
        <path d="M3 5.500h10v9H3zM13 9l4-2v6l-4-2M5 2.500c3-2 7-2 10 0M5 17.500c3 2 7 2 10 0" />
      </Line>
    </TrayButton>
    <TrayButton aria-label="OneDrive">
      <svg width="16" height="14" viewBox="0 0 16 14" aria-hidden="true">
        <path d="M3 10a3 3 0 0 1 0-6 5 5 0 0 1 9 0v6z" fill="#b9b9b9" />
        <circle cx="11.500" cy="9.500" r="4.500" fill="#d13438" />
        <path d="M9.800 7.800l3.400 3.400M13.200 7.800l-3.400 3.400" stroke="#fff" />
      </svg>
    </TrayButton>
    <TrayButton aria-label="Network">
      <Line size={16} width={1.4}>
        <path d="M1 2h5v5H1zM7 4h12.500v10H5V8M3 7v11M12 14v4M8 18.500h8" />
      </Line>
    </TrayButton>
    <TrayButton aria-label="Volume">
      <Line size={16} width={1.4}>
        <path d="M1 7.500h3L8.500 3v14L4 12.500H1zM11.500 7.500c1.500 1.500 1.500 3.500 0 5" />
        <path d="M14 5c3 3 3 7 0 10M16.500 3c4 4 4 10 0 14" opacity=".5" />
      </Line>
    </TrayButton>
    <Clock>
      12:09
      <br />
      18/07/2022
    </Clock>
    <NoticeButton aria-label="Notifications">
      <Line size={18} width={1.3}>
        <path d="M1 2h17v13h-5l-3 3.500L7 15H1z" />
      </Line>
    </NoticeButton>
  </Tray>
);

const App = () => (
  <Desktop>
    <GlobalStyle />
    <Browser>
      <SideRail />
      <Window>
        <BrowserTabs />
        <Frame>
          <Edge />
          <View>
            <Address />
            <Bookmarks>
              {bookmarks.map(([icon, label, width]) => (
                <Bookmark key={label} href="#bookmark" $w={width}>
                  {icon}
                  {label}
                </Bookmark>
              ))}
              <Spacer />
              <ChromeButton $w={40} $color="#b7a8dc" aria-label="More bookmarks">
                <Line size={9} width={3}>
                  <path d="M1 2l8 8-8 8M10 2l8 8-8 8" />
                </Line>
              </ChromeButton>
            </Bookmarks>
            <PageFrame>
              <Repository />
              <ScrollBar>
                <ScrollArrow aria-label="Scroll up">
                  <Chevron />
                </ScrollArrow>
                <ScrollSpace $part={48} />
                <ScrollSpace $part={285} $thumb />
                <ScrollSpace $part={214} />
                <ScrollArrow aria-label="Scroll down">
                  <Chevron down />
                </ScrollArrow>
              </ScrollBar>
            </PageFrame>
          </View>
        </Frame>
      </Window>
    </Browser>
    <TaskBar>
      <StartButton aria-label="Start">
        <svg width="16" height="16" viewBox="0 0 16 16" fill="#fff" aria-hidden="true">
          <path d="M0 2.300L6.500 1.400v6.200H0zM7.300 1.300L16 0v7.600H7.300zM0 8.400h6.500v6.200L0 13.700zM7.300 8.400H16V16l-8.700-1.300z" />
        </svg>
      </StartButton>
      <Search>
        <Line size={17} width={1.5}>
          <circle cx="12.500" cy="7.500" r="6.500" />
          <path d="M8 12l-7 7" />
        </Line>
        <input placeholder="Digite aqui para pesquisar" aria-label="Digite aqui para pesquisar" />
        <SearchArt />
      </Search>
      <TaskIcons />
      <SystemTray />
    </TaskBar>
  </Desktop>
);

export default App;
